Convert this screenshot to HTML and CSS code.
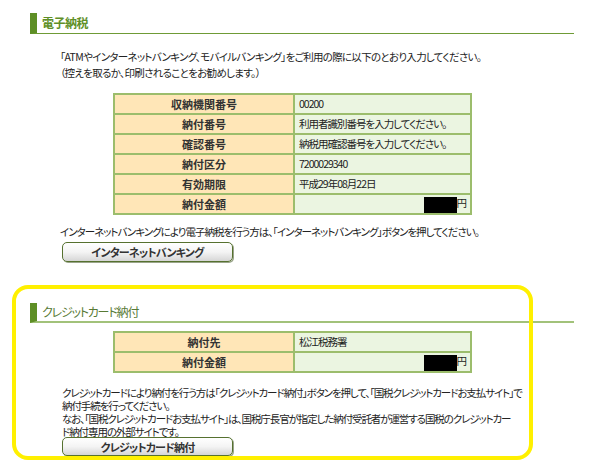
FILE: index.html
```html
<!DOCTYPE html>
<html lang="ja">
<head>
<meta charset="utf-8">
<title>電子納税</title>
<link rel="stylesheet" href="styles.css">
</head>
<body>
<div class="page">
  <section class="sec sec1">
    <h2 class="head">電子納税</h2>
    <p class="intro">「ATMやインターネットバンキング、モバイルバンキング」をご利用の際に以下のとおり入力してください。<br>（控えを取るか、印刷されることをお勧めします。）</p>
    <table class="info">
      <tr><th>収納機関番号</th><td>00200</td></tr>
      <tr><th>納付番号</th><td>利用者識別番号を入力してください。</td></tr>
      <tr><th>確認番号</th><td>納税用確認番号を入力してください。</td></tr>
      <tr><th>納付区分</th><td>7200029340</td></tr>
      <tr><th>有効期限</th><td>平成29年08月22日</td></tr>
      <tr><th>納付金額</th><td class="amount"><span class="mask"></span>円</td></tr>
    </table>
    <p class="note">インターネットバンキングにより電子納税を行う方は、「インターネットバンキング」ボタンを押してください。</p>
    <button class="btn" type="button">インターネットバンキング</button>
  </section>

  <section class="sec sec2">
    <h2 class="head head2">クレジットカード納付</h2>
    <table class="info info2">
      <tr><th>納付先</th><td>松江税務署</td></tr>
      <tr><th>納付金額</th><td class="amount"><span class="mask"></span>円</td></tr>
    </table>
    <p class="desc">クレジットカードにより納付を行う方は「クレジットカード納付」ボタンを押して、「国税クレジットカードお支払サイト」で<br>納付手続を行ってください。<br>なお、「国税クレジットカードお支払サイト」は、国税庁長官が指定した納付受託者が運営する国税のクレジットカー<br>ド納付専用の外部サイトです。</p>
    <button class="btn btn2" type="button">クレジットカード納付</button>
  </section>
</div>
<div class="highlight"></div>
</body>
</html>
```

FILE: styles.css
```css
html, body {
  margin: 0;
  padding: 0;
  background: #ffffff;
}

body {
  width: 600px;
  height: 462px;
  overflow: hidden;
  position: relative;
  font-family: "Noto Sans CJK JP", "Noto Sans", sans-serif;
  font-size: 10.5px;
  color: #222222;
  font-feature-settings: "palt";
}

.page {
  padding: 13px 0 0 30px;
  width: 544px;
}

.head {
  margin: 0;
  height: 20px;
  line-height: 20px;
  border-left: 7px solid #5e8f26;
  border-bottom: 1px solid #6f9b36;
  padding-left: 5px;
  font-size: 12px;
  font-weight: bold;
  color: #5f9028;
  letter-spacing: -0.5px;
}

.head2 {
  height: 18px;
  line-height: 18px;
  font-weight: normal;
  color: #587a35;
  letter-spacing: -1.2px;
  border-bottom: 2px solid #a2c27a;
}

.intro {
  margin: 15px 0 0 30px;
  line-height: 16px;
  letter-spacing: -0.7px;
  white-space: nowrap;
}

.info {
  margin: 12px 0 0 83px;
  width: 359px;
  border-collapse: collapse;
  border: 2px solid #7fa64a;
}

.info th,
.info td {
  height: 18px;
  padding: 0;
  border: 2px solid #9cbd6c;
  font-size: 10.5px;
  line-height: 16px;
}

.info th {
  width: 178px;
  background: #ffe6b7;
  font-weight: bold;
  font-size: 11px;
  text-align: center;
  color: #333333;
}

.info td {
  background: #ebf5e1;
  padding-left: 4px;
  text-align: left;
  letter-spacing: -1px;
}

.info td.amount {
  text-align: right;
  padding-right: 3px;
  letter-spacing: 0;
}

.mask {
  display: inline-block;
  width: 33px;
  height: 16px;
  background: #000000;
  vertical-align: middle;
}

.note {
  margin: 9px 0 0 30px;
  line-height: 16px;
  letter-spacing: -1px;
  white-space: nowrap;
}

.btn {
  display: block;
  margin: 2px 0 0 32px;
  width: 171px;
  height: 20px;
  padding: 0;
  border: 1px solid #56712f;
  border-radius: 5px;
  background: linear-gradient(#ffffff 0%, #f4f4f4 50%, #d6d6d6 100%);
  box-shadow: 1px 1px 0 #9aa58a;
  font-family: "Noto Sans CJK JP", sans-serif;
  font-size: 11px;
  font-weight: bold;
  color: #333333;
  line-height: 18px;
  letter-spacing: -0.8px;
  font-feature-settings: "palt";
}

.sec2 {
  margin-top: 41px;
}

.info2 {
  margin-top: 8px;
}

.desc {
  margin: 13px 0 0 32px;
  line-height: 13px;
  letter-spacing: -1.1px;
  white-space: nowrap;
}

.btn2 {
  margin-top: -1px;
  height: 19px;
}

.highlight {
  position: absolute;
  left: 12px;
  top: 285px;
  width: 513px;
  height: 167px;
  border: 4px solid #fff000;
  border-radius: 16px;
  pointer-events: none;
}
```
